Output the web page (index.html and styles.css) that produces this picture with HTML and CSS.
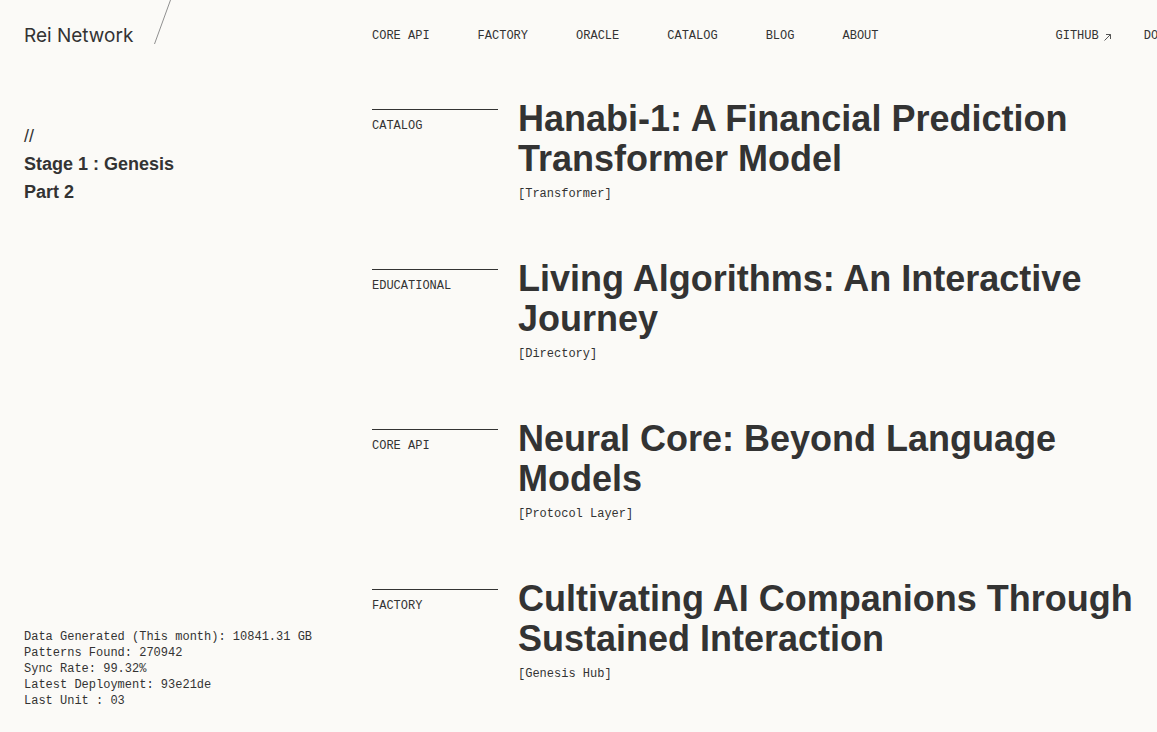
FILE: index.html
```html
<!DOCTYPE html>
<html lang="en">
<head>
<meta charset="utf-8">
<title>Rei Network</title>
<link rel="stylesheet" href="styles.css">
</head>
<body>
<header class="site-header">
  <div class="brand">
    <span class="brand-name">Rei Network</span>
    <svg class="brand-slash" width="17" height="45" viewBox="0 0 17 45"><line x1="16.5" y1="0" x2="0.5" y2="44" stroke="#8f8f8f" stroke-width="1"/></svg>
  </div>
  <nav class="nav">
    <a class="nav-link" href="#">CORE API</a>
    <a class="nav-link" href="#">FACTORY</a>
    <a class="nav-link" href="#">ORACLE</a>
    <a class="nav-link" href="#">CATALOG</a>
    <a class="nav-link" href="#">BLOG</a>
    <a class="nav-link" href="#">ABOUT</a>
    <div class="nav-ext">
      <a class="nav-link" href="#">GITHUB<svg class="ext-arrow" width="9" height="9" viewBox="0 0 9 9"><path d="M1.5 7.5 L7.5 1.5 M3 1.5 H7.5 V6" fill="none" stroke="#555" stroke-width="1"/></svg></a>
      <a class="nav-link" href="#">DOCS<svg class="ext-arrow" width="9" height="9" viewBox="0 0 9 9"><path d="M1.5 7.5 L7.5 1.5 M3 1.5 H7.5 V6" fill="none" stroke="#555" stroke-width="1"/></svg></a>
    </div>
  </nav>
</header>
<main class="layout">
  <aside class="sidebar">
    <div class="stage">
      <div class="stage-mark">//</div>
      <div class="stage-title">Stage 1 : Genesis</div>
      <div class="stage-title">Part 2</div>
    </div>
    <div class="stats">
      <div>Data Generated (This month): 10841.31 GB</div>
      <div>Patterns Found: 270942</div>
      <div>Sync Rate: 99.32%</div>
      <div>Latest Deployment: 93e21de</div>
      <div>Last Unit : 03</div>
    </div>
  </aside>
  <section class="posts">
    <article class="post">
      <div class="post-cat">CATALOG</div>
      <div class="post-body">
        <h2 class="post-title">Hanabi-1: A Financial Prediction Transformer Model</h2>
        <div class="post-tag">[Transformer]</div>
      </div>
    </article>
    <article class="post">
      <div class="post-cat">EDUCATIONAL</div>
      <div class="post-body">
        <h2 class="post-title">Living Algorithms: An Interactive Journey</h2>
        <div class="post-tag">[Directory]</div>
      </div>
    </article>
    <article class="post">
      <div class="post-cat">CORE API</div>
      <div class="post-body">
        <h2 class="post-title">Neural Core: Beyond Language Models</h2>
        <div class="post-tag">[Protocol Layer]</div>
      </div>
    </article>
    <article class="post">
      <div class="post-cat">FACTORY</div>
      <div class="post-body">
        <h2 class="post-title">Cultivating AI Companions Through Sustained Interaction</h2>
        <div class="post-tag">[Genesis Hub]</div>
      </div>
    </article>
  </section>
</main>
</body>
</html>
```
FILE: styles.css
```css
html, body {
  margin: 0;
  padding: 0;
  overflow: hidden;
}
body {
  background: #fbfaf7;
  color: #333333;
  font-family: "Liberation Sans", Arial, sans-serif;
}
a {
  color: inherit;
  text-decoration: none;
}
.site-header {
  display: grid;
  grid-template-columns: 372px 1fr;
  height: 99px;
}
.brand {
  display: flex;
  align-items: flex-start;
  padding-left: 24px;
}
.brand-name {
  font-family: Inter, "Liberation Sans", sans-serif;
  font-size: 19px;
  line-height: 24px;
  margin-top: 24px;
  color: #333;
}
.brand-slash {
  display: block;
  margin-left: 21px;
}
.nav {
  display: flex;
  align-items: flex-start;
  gap: 48px;
  padding-top: 28px;
  white-space: nowrap;
}
.nav-link {
  font-family: "Liberation Mono", "Courier New", monospace;
  font-size: 12px;
  line-height: 16px;
  color: #333;
  display: flex;
  align-items: center;
}
.nav-ext {
  display: flex;
  gap: 32px;
  margin-left: 129px;
}
.ext-arrow {
  margin-left: 4px;
  margin-top: 2px;
}
.layout {
  display: grid;
  grid-template-columns: 372px 1fr;
}
.sidebar {
  height: calc(100vh - 99px);
  box-sizing: border-box;
  padding: 23px 0 23px 24px;
  display: flex;
  flex-direction: column;
  justify-content: space-between;
}
.stage {
  font-size: 18px;
  line-height: 28px;
}
.stage-mark {
  font-weight: 400;
}
.stage-title {
  font-weight: 700;
}
.stats {
  font-family: "Liberation Mono", "Courier New", monospace;
  font-size: 12px;
  line-height: 16px;
}
.posts {
  display: flex;
  flex-direction: column;
  gap: 57px;
}
.post {
  display: grid;
  grid-template-columns: 126px 1fr;
  gap: 20px;
  align-items: start;
}
.post-cat {
  margin-top: 10px;
  border-top: 1px solid #333;
  padding-top: 8px;
  font-family: "Liberation Mono", "Courier New", monospace;
  font-size: 12px;
  line-height: 16px;
}
.post-body {
  max-width: 632px;
}
.post-title {
  margin: 0;
  font-size: 36px;
  line-height: 40px;
  font-weight: 700;
  color: #333;
}
.post-tag {
  margin-top: 7px;
  font-family: "Liberation Mono", "Courier New", monospace;
  font-size: 12px;
  line-height: 16px;
}
```
